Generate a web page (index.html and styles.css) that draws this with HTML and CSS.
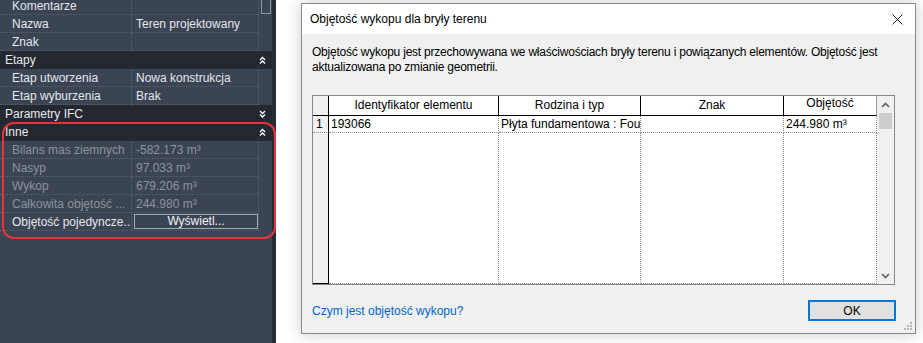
FILE: index.html
```html
<!DOCTYPE html>
<html>
<head>
  <meta charset="utf-8">
  <link rel="stylesheet" href="styles.css">
</head>
<body>
  <div class="screen">
    <!-- Properties palette -->
    <div class="props">
      <div class="prop-list">
        <div class="row first">
          <span class="name">Komentarze</span><span class="value"></span>
          <span class="track"><span class="thumb"></span></span>
        </div>
        <div class="row">
          <span class="name">Nazwa</span><span class="value">Teren projektowany</span><span class="track"></span>
        </div>
        <div class="row">
          <span class="name">Znak</span><span class="value"></span><span class="track"></span>
        </div>
        <div class="group">
          <span>Etapy</span>
          <svg class="chevron" width="7" height="8" viewBox="0 0 7 8"><polyline points="1,4 3.5,1.5 6,4"/><polyline points="1,7.5 3.5,5 6,7.5"/></svg>
        </div>
        <div class="row">
          <span class="name">Etap utworzenia</span><span class="value">Nowa konstrukcja</span><span class="track"></span>
        </div>
        <div class="row">
          <span class="name">Etap wyburzenia</span><span class="value">Brak</span><span class="track"></span>
        </div>
        <div class="group">
          <span>Parametry IFC</span>
          <svg class="chevron" width="7" height="8" viewBox="0 0 7 8"><polyline points="1,1 3.5,3.5 6,1"/><polyline points="1,4.5 3.5,7 6,4.5"/></svg>
        </div>
        <div class="group">
          <span>Inne</span>
          <svg class="chevron" width="7" height="8" viewBox="0 0 7 8"><polyline points="1,4 3.5,1.5 6,4"/><polyline points="1,7.5 3.5,5 6,7.5"/></svg>
        </div>
        <div class="row disabled">
          <span class="name">Bilans mas ziemnych</span><span class="value">-582.173 m³</span><span class="track"></span>
        </div>
        <div class="row disabled">
          <span class="name">Nasyp</span><span class="value">97.033 m³</span><span class="track"></span>
        </div>
        <div class="row disabled">
          <span class="name">Wykop</span><span class="value">679.206 m³</span><span class="track"></span>
        </div>
        <div class="row disabled">
          <span class="name">Całkowita objętość ...</span><span class="value">244.980 m³</span><span class="track"></span>
        </div>
        <div class="row">
          <span class="name">Objętość pojedyncze...</span>
          <span class="value"><span class="prop-button">Wyświetl...</span></span>
          <span class="track"></span>
        </div>
      </div>
      <div class="edge"></div>
      <div class="callout"></div>
    </div>

    <!-- Dialog -->
    <div class="dialog">
      <div class="titlebar">
        <span>Objętość wykopu dla bryły terenu</span>
        <svg class="close" width="11" height="11" viewBox="0 0 11 11"><path d="M0.5 0.5 L10.5 10.5 M10.5 0.5 L0.5 10.5"/></svg>
      </div>
      <div class="dialog-body">
        <p class="intro">Objętość wykopu jest przechowywana we właściwościach bryły terenu i powiązanych elementów. Objętość jest aktualizowana po zmianie geometrii.</p>

        <div class="grid-frame">
          <div class="grid">
            <div class="grid-row head">
              <div class="cell num"></div>
              <div class="cell c-id">Identyfikator elementu</div>
              <div class="cell c-type">Rodzina i typ</div>
              <div class="cell c-mark">Znak</div>
              <div class="cell c-vol raised">Objętość</div>
            </div>
            <div class="grid-row data">
              <div class="cell num">1</div>
              <div class="cell c-id">193066</div>
              <div class="cell c-type">Płyta fundamentowa : Foundation</div>
              <div class="cell c-mark"></div>
              <div class="cell c-vol">244.980 m³</div>
            </div>
            <div class="grid-row filler">
              <div class="cell num"></div>
              <div class="cell c-id"></div>
              <div class="cell c-type"></div>
              <div class="cell c-mark"></div>
              <div class="cell c-vol"></div>
            </div>
          </div>
          <div class="vscroll">
            <svg class="arrow" width="9" height="6" viewBox="0 0 9 6"><polyline points="1,5 4.5,1.5 8,5"/></svg>
            <div class="vthumb"></div>
            <div class="spacer"></div>
            <svg class="arrow" width="9" height="6" viewBox="0 0 9 6"><polyline points="1,1 4.5,4.5 8,1"/></svg>
          </div>
        </div>

        <div class="footer">
          <a class="help-link" href="#">Czym jest objętość wykopu?</a>
          <button class="ok-button">OK</button>
        </div>
        <svg class="grip" width="9" height="9" viewBox="0 0 9 9">
          <rect x="6" y="0" width="2" height="2"/>
          <rect x="3" y="3" width="2" height="2"/><rect x="6" y="3" width="2" height="2"/>
          <rect x="0" y="6" width="2" height="2"/><rect x="3" y="6" width="2" height="2"/><rect x="6" y="6" width="2" height="2"/>
        </svg>
      </div>
    </div>
  </div>
</body>
</html>
```

FILE: styles.css
```css
body {
  margin: 0;
  background: #ffffff;
  font-family: "Liberation Sans", Arial, sans-serif;
  font-size: 12px;
  overflow: hidden;
}

.screen {
  display: flex;
  align-items: flex-start;
  width: 923px;
  height: 343px;
}

/* Properties palette */

.props {
  position: relative;
  display: flex;
  height: 343px;
  background: #3b4453;
}

.prop-list {
  width: 272px;
  margin-top: -3px;
}

.edge {
  width: 4px;
  background: #272c34;
}

.row {
  display: flex;
  height: 18px;
  color: #e4e7ec;
  line-height: 18px;
}

.row .name {
  width: 119px;
  padding-left: 12px;
  border-right: 1px dotted #59616f;
  border-bottom: 1px dotted #59616f;
  white-space: nowrap;
  overflow: hidden;
}

.row .value {
  width: 122px;
  padding-left: 4px;
  border-right: 1px dotted #59616f;
  border-bottom: 1px dotted #59616f;
  white-space: nowrap;
  overflow: hidden;
}

.row .track {
  position: relative;
  flex: 1;
}

.row .thumb {
  position: absolute;
  left: 2px;
  top: -4px;
  width: 8px;
  height: 19px;
  border: 1px solid #8f96a2;
}

.row.disabled {
  color: #8c939e;
}

.prop-button {
  display: block;
  margin: 1px 0 0 -2px;
  height: 13px;
  border: 1px solid #a3a9b3;
  color: #f0f2f5;
  text-align: center;
  line-height: 13px;
}

.group {
  display: flex;
  align-items: center;
  justify-content: space-between;
  height: 18px;
  padding: 0 6px 0 5px;
  background: #232831;
  color: #e8eaee;
}

.chevron {
  fill: none;
  stroke: #ffffff;
  stroke-width: 1.3;
}

.callout {
  position: absolute;
  left: 2px;
  top: 122px;
  width: 270px;
  height: 113px;
  border: 2.5px solid #e8333b;
  border-radius: 12px;
}

/* Dialog */

.dialog {
  margin: 3px 0 0 25px;
  width: 613px;
  height: 329px;
  border: 1px solid #8a8a8a;
  box-shadow: 0 0 14px rgba(0, 0, 0, 0.22);
  display: flex;
  flex-direction: column;
}

.titlebar {
  height: 30px;
  background: #ffffff;
  display: flex;
  align-items: center;
  justify-content: space-between;
  padding: 0 12px 0 8px;
  color: #000000;
}

.close {
  stroke: #222222;
  stroke-width: 1;
  fill: none;
}

.dialog-body {
  position: relative;
  flex: 1;
  background: #f0f0f0;
  padding: 11px 0 0 10px;
}

.intro {
  margin: 0;
  width: 582px;
  line-height: 15px;
  letter-spacing: -0.22px;
  color: #000000;
}

.grid-frame {
  display: flex;
  margin-top: 20px;
  width: 581px;
  height: 188px;
  border: 1px solid #828790;
  background: #ffffff;
}

.grid {
  display: flex;
  flex-direction: column;
  width: 564px;
}

.grid-row {
  display: flex;
}

.cell {
  box-sizing: border-box;
  white-space: nowrap;
  overflow: hidden;
  color: #000000;
}

.num { width: 16px; padding-left: 3px; background: #f0f0f0; border-right: 1px solid #000000; }
.c-id { width: 170px; }
.c-type { width: 142px; }
.c-mark { width: 143px; }
.c-vol { width: 93px; }

.head .cell {
  height: 20px;
  border-bottom: 1px solid #000000;
  border-right: 1px solid #000000;
  text-align: center;
  line-height: 19px;
}

.head .raised {
  border-right-color: #9a9a9a;
  line-height: 15px;
}

.data .cell {
  height: 17px;
  line-height: 16px;
  padding-left: 2px;
  border-bottom: 1px dotted #8a8a8a;
  border-right: 1px dotted #8a8a8a;
}

.data .num {
  padding-left: 3px;
  border-right: 1px solid #000000;
}

.filler {
  flex: 1;
}

.filler .cell {
  border-right: 1px dotted #8a8a8a;
  border-bottom: 1px dotted #8a8a8a;
}

.filler .num {
  border-right: 1px solid #000000;
  border-bottom: 1px solid #000000;
}

.vscroll {
  flex: 1;
  display: flex;
  flex-direction: column;
  align-items: center;
  background: #f0f0f0;
  padding: 6px 0 5px;
}

.arrow {
  fill: none;
  stroke: #606060;
  stroke-width: 1.6;
}

.vthumb {
  width: 13px;
  height: 16px;
  margin-top: 5px;
  background: #cdcdcd;
}

.spacer {
  flex: 1;
}

.footer {
  display: flex;
  align-items: center;
  justify-content: space-between;
  width: 584px;
  margin-top: 15px;
}

.help-link {
  color: #0066cc;
  text-decoration: none;
}

.ok-button {
  width: 88px;
  height: 21px;
  padding: 0;
  border: 2px solid #0078d7;
  background: #e1e1e1;
  font-family: "Liberation Sans", Arial, sans-serif;
  font-size: 12px;
  color: #000000;
}

.grip {
  position: absolute;
  right: 2px;
  bottom: 2px;
  fill: #b5b5b5;
}
```
